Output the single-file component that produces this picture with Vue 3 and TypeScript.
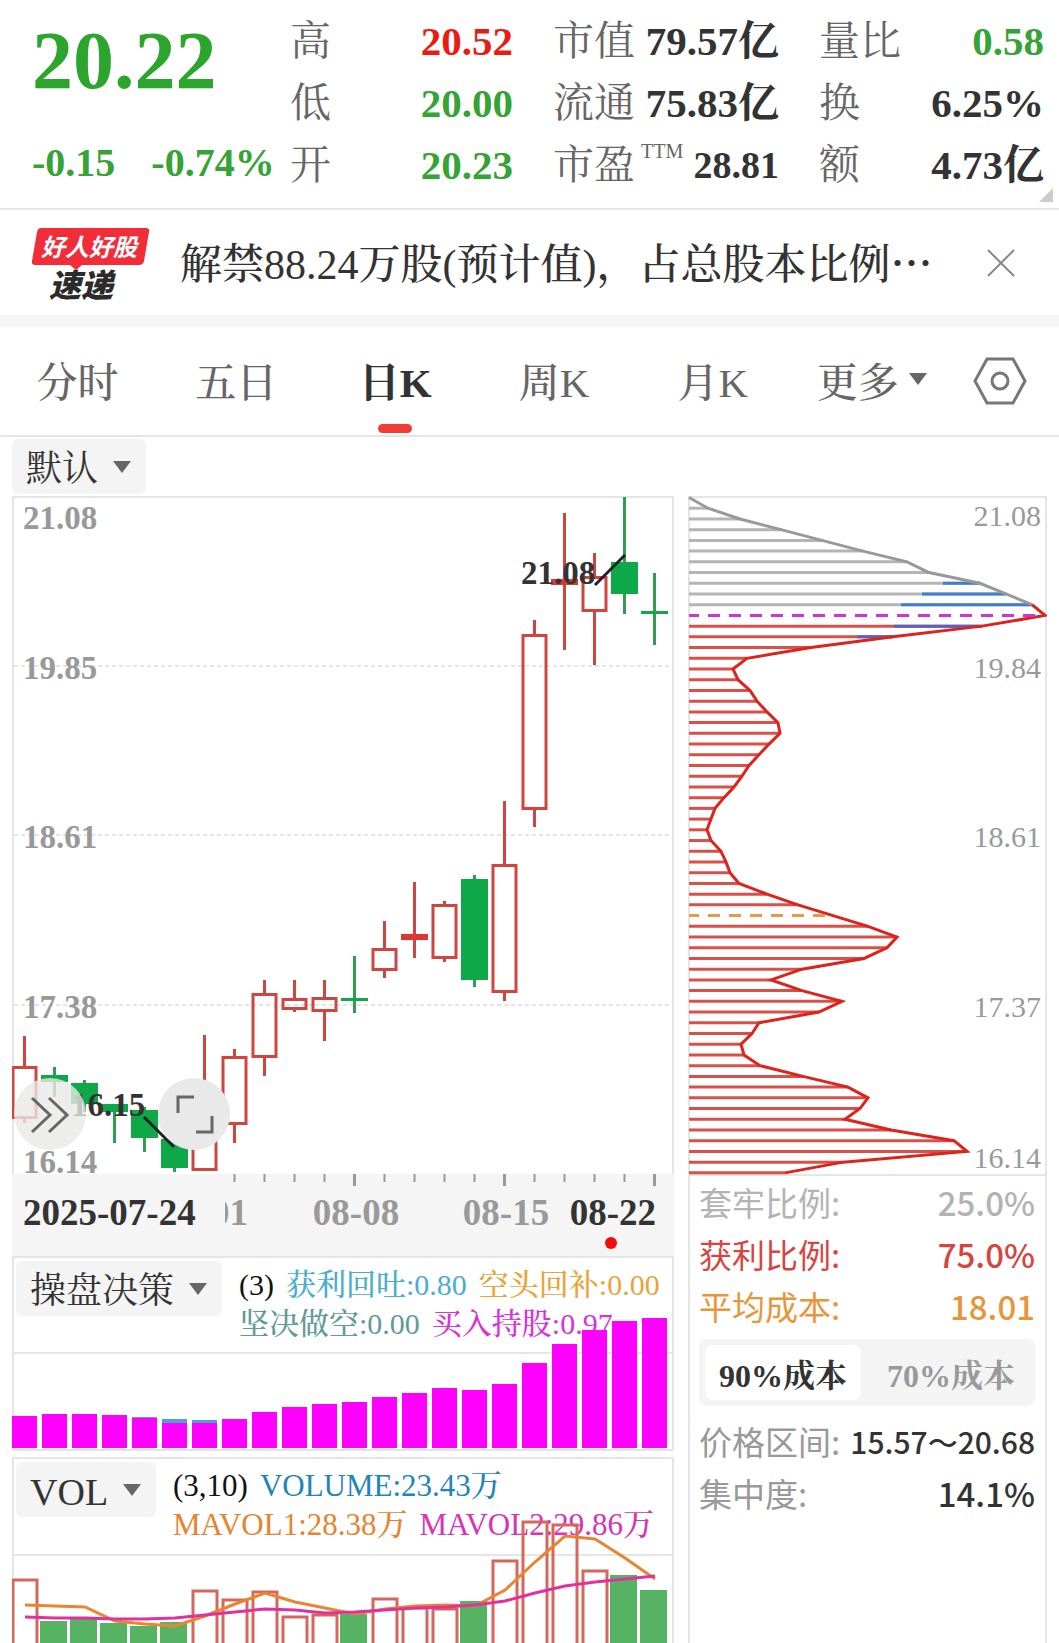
<script setup lang="ts">
import { ref } from 'vue'

interface Stat { label: string; value: string; tone?: string; note?: string }
interface Candle { up: boolean; high: number; top: number; bottom: number; low: number }

const quoteColumns: Stat[][] = [
  [
    { label: '高', value: '20.52', tone: 'rise' },
    { label: '低', value: '20.00', tone: 'fall' },
    { label: '开', value: '20.23', tone: 'fall' },
  ],
  [
    { label: '市值', value: '79.57亿' },
    { label: '流通', value: '75.83亿' },
    { label: '市盈', value: '28.81', note: 'TTM' },
  ],
  [
    { label: '量比', value: '0.58', tone: 'fall' },
    { label: '换', value: '6.25%' },
    { label: '额', value: '4.73亿' },
  ],
]

const tabs = ['分时', '五日', '日K', '周K', '月K', '更多']
const activeTab = ref('日K')
const costRange = ref('90%成本')
const newsOpen = ref(true)

const step = 30
const centerX = (i: number) => 24 + i * step

const c = (up: boolean, high: number, top: number, bottom: number, low: number): Candle =>
  ({ up, high, top, bottom, low })

const candles: Candle[] = [
  c(true, 1036, 1066, 1119, 1123),
  c(false, 1067, 1075, 1082, 1097),
  c(false, 1080, 1083, 1104, 1112),
  c(false, 1104, 1104, 1112, 1143),
  c(false, 1107, 1110, 1138, 1152),
  c(false, 1139, 1139, 1168, 1172),
  c(true, 1035, 1120, 1171, 1171),
  c(true, 1049, 1056, 1125, 1143),
  c(true, 980, 993, 1058, 1076),
  c(true, 980, 998, 1010, 1012),
  c(true, 980, 997, 1012, 1041),
  c(false, 956, 998, 1001, 1013),
  c(true, 921, 948, 971, 978),
  c(true, 882, 934, 940, 958),
  c(true, 901, 904, 959, 962),
  c(false, 875, 879, 980, 987),
  c(true, 801, 864, 993, 1001),
  c(true, 620, 634, 810, 827),
  c(true, 513, 579, 585, 650),
  c(true, 553, 576, 612, 665),
  c(false, 497, 562, 594, 614),
  c(false, 573, 611, 614, 645),
]

const priceLabels = [
  { text: '21.08', y: 529 },
  { text: '19.85', y: 679 },
  { text: '18.61', y: 848 },
  { text: '17.38', y: 1018 },
  { text: '16.14', y: 1173 },
]
const gridLines = [666, 835, 1005]
const ticks = Array.from({ length: 15 }, (_, i) => i + 7)
const isMajor = (i: number) => i === 11 || i === 16 || i === 21

const holdTops = [1416, 1414, 1414, 1415, 1418, 1423, 1423, 1419, 1412, 1407, 1404, 1402, 1397, 1393, 1388, 1390, 1384, 1363, 1344, 1330, 1321, 1318]
const profitTops: Record<number, number> = { 4: 1417, 5: 1419, 6: 1420 }

const volumes: [boolean, number][] = [
  [true, 1579], [false, 1621], [false, 1619], [false, 1623], [false, 1626], [false, 1622],
  [true, 1590], [true, 1599], [true, 1591], [true, 1616], [true, 1614], [false, 1614],
  [true, 1598], [true, 1607], [true, 1608], [false, 1601], [true, 1560], [true, 1521],
  [true, 1524], [true, 1570], [false, 1575], [false, 1590],
]
const ma3 = [1605, 1606, 1607, 1621, 1624, 1626, 1616, 1604, 1593, 1602, 1608, 1614, 1609, 1606, 1605, 1606, 1590, 1562, 1536, 1539, 1558, 1579]
const ma10 = [1617, 1618, 1618, 1619, 1619, 1618, 1615, 1612, 1609, 1610, 1613, 1612, 1610, 1608, 1607, 1605, 1601, 1593, 1586, 1582, 1579, 1576]
const toPoints = (ys: number[]) => ys.map((y, i) => `${centerX(i) + 1},${y}`).join(' ')

/* Share of chips held at each price level, from the highest price down. */
const chips = [
  0, 19, 51, 92, 133, 174, 218, 240, 291, 317, 343, 356, 293, 204, 122, 58,
  44, 49, 61, 68, 78, 89, 91, 80, 70, 60, 53, 45, 35, 26, 22, 18,
  22, 32, 37, 41, 50, 78, 109, 144, 179, 208, 198, 175, 113, 82, 113, 153,
  130, 70, 63, 52, 55, 71, 114, 159, 179, 171, 156, 202, 265, 278, 154, 96,
]
const chipLeft = 689
const chipY = (k: number) => 497.5 + k * 10.72
const currentLevel = 11
const averageLevel = 39
const recentChips: { k: number; from: number }[] = [
  { k: 8, from: 254 }, { k: 9, from: 233 }, { k: 10, from: 212 },
  { k: 12, from: 205 }, { k: 13, from: 168 },
]
const chipRows = chips
  .map((w, k) => ({ w, k }))
  .filter(({ w, k }) => w > 0 && k !== currentLevel && k !== averageLevel)
const outline = (from: number, to: number) =>
  chips.slice(from, to).map((w, i) => `${chipLeft + w},${chipY(from + i)}`).join(' ')
const chipLabels = [
  { text: '21.08', y: 526 },
  { text: '19.84', y: 678 },
  { text: '18.61', y: 847 },
  { text: '17.37', y: 1017 },
  { text: '16.14', y: 1168 },
]
</script>

<template>
  <main class="page">
    <header class="quote">
      <div class="price">
        <strong class="last">20.22</strong>
        <div class="change"><span>-0.15</span><span>-0.74%</span></div>
      </div>
      <dl v-for="(column, n) in quoteColumns" :key="n" class="stats">
        <div v-for="s in column" :key="s.label" class="stat">
          <dt>{{ s.label }}<sup v-if="s.note">{{ s.note }}</sup></dt>
          <dd :class="[s.tone, { compact: s.note }]">{{ s.value }}</dd>
        </div>
      </dl>
      <span class="corner"></span>
    </header>

    <section v-if="newsOpen" class="news">
      <svg class="badge" viewBox="0 0 118 84" role="img" aria-label="好人好股速递">
        <path d="M9 1H114Q118 1 117 5L112 34Q111 38 107 38H50L44 43L38 38H3Q-1 38 0 34L5 5Q6 1 9 1Z" fill="#f22d3a" />
        <text x="9" y="29" class="badge-top">好人好股</text>
        <text x="17" y="70" class="badge-bottom">速递</text>
      </svg>
      <a class="headline" href="#">解禁88.24万股(预计值)，占总股本比例<span class="dots">…</span></a>
      <button class="close" aria-label="关闭" @click="newsOpen = false">
        <svg viewBox="0 0 28 28"><path d="M1 1L27 27M27 1L1 27" /></svg>
      </button>
    </section>

    <nav class="tabs">
      <button v-for="t in tabs" :key="t" class="tab" :class="{ active: t === activeTab }" @click="activeTab = t">
        {{ t }}<span v-if="t === '更多'" class="arrow"></span>
      </button>
      <button class="settings" aria-label="设置">
        <svg viewBox="0 0 54 48">
          <path d="M14 2H40L52 24L40 46H14L2 24Z" />
          <circle cx="27" cy="24" r="8" />
        </svg>
      </button>
    </nav>

    <div class="toolbar">
      <label class="picker">
        <select aria-label="均线方案"><option>默认</option></select>
        <span class="arrow"></span>
      </label>
    </div>

    <div class="board">
      <div class="left">
        <section class="kline">
          <svg class="plot" viewBox="12 496 662 760">
            <rect x="13" y="497" width="660" height="700" class="frame" />
            <line v-for="y in gridLines" :key="y" x1="14" x2="670" :y1="y" :y2="y" class="dashed" />
            <text v-for="p in priceLabels" :key="p.text" x="23" :y="p.y" class="scale">{{ p.text }}</text>
            <g v-for="(k, i) in candles" :key="i" :class="k.up ? 'up' : 'down'">
              <line :x1="centerX(i) + 0.5" :x2="centerX(i) + 0.5" :y1="k.high" :y2="k.top" />
              <line :x1="centerX(i) + 0.5" :x2="centerX(i) + 0.5" :y1="k.bottom" :y2="k.low" />
              <rect
                v-if="k.up && k.bottom - k.top > 6"
                :x="centerX(i) - 11" :y="k.top + 1.5" width="23" :height="k.bottom - k.top - 3"
                class="hollow"
              />
              <rect v-else :x="centerX(i) - 13" :y="k.top" width="27" :height="k.bottom - k.top" class="solid" />
            </g>
            <text x="521" y="584" class="scale dark">21.08</text>
            <path d="M595 585L625 555M144 1117L174 1147" class="pointer" />
            <text x="71" y="1116" class="scale dark">16.15</text>

            <rect x="12" y="1174" width="662" height="82" fill="#f5f5f5" />
            <line
              v-for="i in ticks" :key="i"
              :x1="centerX(i) + 0.5" :x2="centerX(i) + 0.5" y1="1174" :y2="isMajor(i) ? 1186 : 1182"
              stroke="#999" :stroke-width="isMajor(i) ? 3 : 2"
            />
            <clipPath id="date-clip"><rect x="225" y="1190" width="60" height="50" /></clipPath>
            <text x="248" y="1225" text-anchor="end" class="date" clip-path="url(#date-clip)">01</text>
            <text x="23" y="1225" class="date dark">2025-07-24</text>
            <text x="356" y="1225" text-anchor="middle" class="date">08-08</text>
            <text x="506" y="1225" text-anchor="middle" class="date">08-15</text>
            <text x="656" y="1225" text-anchor="end" class="date dark">08-22</text>
            <circle cx="611" cy="1243" r="6" fill="#f40b0b" />
          </svg>
          <div class="floating">
            <button class="round faint" aria-label="展开">
              <svg viewBox="0 0 72 72"><path d="M18 20L36 37L18 54M35 20L53 37L35 54" /></svg>
            </button>
            <button class="round" aria-label="全屏">
              <svg viewBox="0 0 72 72"><path d="M20 35V19H36M54 38V54H38" /></svg>
            </button>
          </div>
        </section>

        <section class="indicator">
          <div class="legend">
            <label class="picker">
              <select aria-label="指标一"><option>操盘决策</option></select>
              <span class="arrow"></span>
            </label>
            <p class="values">
              <span class="ink">(3)</span>
              <span class="sky">获利回吐:0.80</span>
              <span class="amber">空头回补:0.00</span>
              <span class="teal">坚决做空:0.00</span>
              <span class="pink">买入持股:0.97</span>
            </p>
          </div>
          <svg class="plot" viewBox="12 1256 662 195">
            <rect x="13" y="1257" width="660" height="193" class="frame" />
            <line x1="13" x2="673" y1="1353" y2="1353" class="frame" />
            <rect
              v-for="(top, i) in profitTops" :key="'p' + i"
              :x="centerX(Number(i)) - 12" :y="top" width="25" :height="1448 - top" fill="#4f9fd8"
            />
            <rect
              v-for="(top, i) in holdTops" :key="i"
              :x="centerX(i) - 12" :y="top" width="25" :height="1448 - top" fill="#f0f"
            />
          </svg>
        </section>

        <section class="indicator">
          <div class="legend">
            <label class="picker latin">
              <select aria-label="指标二"><option>VOL</option></select>
              <span class="arrow"></span>
            </label>
            <p class="values wide">
              <span class="ink">(3,10)</span>
              <span class="blue">VOLUME:23.43万</span>
              <span class="orange">MAVOL1:28.38万</span>
              <span class="rose">MAVOL2:29.86万</span>
            </p>
          </div>
          <svg class="plot" viewBox="12 1457 662 186">
            <rect x="13" y="1458" width="660" height="200" class="frame" />
            <line x1="13" x2="673" y1="1555" y2="1555" class="frame" />
            <template v-for="([up, top], i) in volumes" :key="i">
              <rect v-if="up" :x="centerX(i) - 11" :y="top + 1" width="24" height="150" class="vol-up" />
              <rect v-else :x="centerX(i) - 14" :y="top" width="27" height="150" fill="#57b364" />
            </template>
            <polyline :points="toPoints(ma3)" stroke="#e8862f" class="average" />
            <polyline :points="toPoints(ma10)" stroke="#e0319f" class="average" />
          </svg>
        </section>
      </div>

      <aside class="right">
        <svg class="plot" viewBox="688 496 359 680">
          <rect x="689" y="497" width="357" height="678" class="frame" />
          <line
            v-for="r in chipRows" :key="r.k"
            :x1="chipLeft" :x2="chipLeft + r.w" :y1="chipY(r.k)" :y2="chipY(r.k)"
            :stroke="r.k < currentLevel ? '#b5b5b5' : '#d9504b'" stroke-width="3"
          />
          <line
            v-for="b in recentChips" :key="'b' + b.k"
            :x1="chipLeft + b.from" :x2="chipLeft + chips[b.k]" :y1="chipY(b.k)" :y2="chipY(b.k)"
            :stroke="b.k < currentLevel ? '#3f80cc' : '#5462c4'" stroke-width="3"
          />
          <polyline :points="outline(0, 11)" stroke="#999" class="contour" />
          <polyline :points="outline(10, 64)" stroke="#dc231c" class="contour" />
          <line
            :x1="chipLeft" x2="1036" :y1="chipY(currentLevel)" :y2="chipY(currentLevel)"
            stroke="#cf35d3" stroke-width="3" stroke-dasharray="12 9" stroke-dashoffset="2"
          />
          <line
            :x1="chipLeft" x2="825" :y1="chipY(averageLevel)" :y2="chipY(averageLevel)"
            stroke="#e59b4c" stroke-width="3" stroke-dasharray="12 9" stroke-dashoffset="2"
          />
          <text v-for="p in chipLabels" :key="p.text" x="1041" :y="p.y" text-anchor="end" class="chip-scale">{{ p.text }}</text>
        </svg>
        <div class="summary">
          <dl class="facts">
            <div class="silver"><dt>套牢比例:</dt><dd>25.0%</dd></div>
            <div class="red"><dt>获利比例:</dt><dd>75.0%</dd></div>
            <div class="gold"><dt>平均成本:</dt><dd>18.01</dd></div>
          </dl>
          <div class="segment">
            <button
              v-for="r in ['90%成本', '70%成本']" :key="r"
              :class="{ on: costRange === r }" @click="costRange = r"
            >{{ r }}</button>
          </div>
          <dl class="facts plain">
            <div><dt>价格区间:</dt><dd class="range">15.57～20.68</dd></div>
            <div><dt>集中度:</dt><dd>14.1%</dd></div>
          </dl>
        </div>
      </aside>
    </div>
  </main>
</template>

<style>
body {
  margin: 0;
  background: #fff;
}
</style>

<style scoped>
.page {
  font-family: "Liberation Serif", "Noto Serif CJK SC", "Noto Sans CJK SC", serif;
  color: #333;
  background: #fff;
}
button,
select {
  margin: 0;
  padding: 0;
  border: 0;
  background: none;
  color: inherit;
  font: inherit;
  appearance: none;
}
dl, dd, p {
  margin: 0;
}

.quote {
  position: relative;
  display: grid;
  grid-template-columns: minmax(0, 218fr) minmax(0, 223fr) minmax(0, 226fr) minmax(0, 225fr);
  column-gap: 40px;
  padding: 10px 15px 12px 32px;
  border-bottom: 2px solid #e5e5e5;
}
.price {
  color: #2ba52b;
  font-weight: bold;
  white-space: nowrap;
}
.last {
  display: block;
  font-size: 82px;
  line-height: 102px;
}
.change {
  display: flex;
  gap: 36px;
  margin-top: 20px;
  font-size: 40px;
  line-height: 62px;
  color: #35a335;
}
.stat {
  display: flex;
  justify-content: space-between;
  font-size: 41px;
  line-height: 62px;
  white-space: nowrap;
}
.stat dt {
  display: flex;
  color: #666;
}
.stat sup {
  margin-left: 6px;
  font-size: 20px;
  line-height: 34px;
}
.stat dd {
  font-weight: bold;
}
.stat .compact {
  font-size: 38px;
}
.rise {
  color: #ea1c12;
}
.fall {
  color: #35a335;
}
.corner {
  position: absolute;
  right: 6px;
  bottom: 6px;
  border-left: 14px solid transparent;
  border-bottom: 14px solid #ccc;
}

.news {
  display: flex;
  align-items: center;
  height: 105px;
  padding: 0 44px 0 32px;
}
.badge {
  width: 118px;
  height: 84px;
  margin-top: 12px;
  flex: none;
}
.badge-top {
  font: italic bold 24px "Noto Sans CJK SC", sans-serif;
  fill: #fff;
}
.badge-bottom {
  font: italic 900 32px "Noto Sans CJK SC", sans-serif;
  fill: #2b2b2b;
}
.headline {
  flex: 1;
  min-width: 0;
  margin: 0 30px;
  overflow: hidden;
  color: #333;
  font-size: 42px;
  font-weight: 500;
  line-height: 62px;
  text-decoration: none;
  white-space: nowrap;
}
.dots {
  font-family: "Noto Sans CJK SC", sans-serif;
}
.close {
  width: 28px;
  height: 28px;
}
.close svg {
  display: block;
  stroke: #888;
  stroke-width: 2;
}

.tabs {
  display: grid;
  grid-template-columns: repeat(6, 3fr) 2fr;
  border-top: 12px solid #f5f5f5;
  border-bottom: 2px solid #e5e5e5;
}
.tab {
  position: relative;
  display: flex;
  align-items: center;
  justify-content: center;
  height: 108px;
  padding: 0 4px 4px 0;
  color: #666;
  font-size: 41px;
  font-weight: 500;
}
.active {
  color: #333;
  font-weight: bold;
}
.active::after {
  content: "";
  position: absolute;
  bottom: 2px;
  width: 34px;
  height: 9px;
  border-radius: 5px;
  background: #f23c36;
}
.arrow {
  border: 9px solid transparent;
  border-top: 12px solid #666;
  border-bottom: 0;
}
.tab .arrow {
  margin-left: 10px;
}
.settings {
  display: flex;
  align-items: center;
  justify-content: center;
  padding-right: 12px;
}
.settings svg {
  width: 54px;
  height: 48px;
  fill: none;
  stroke: #777;
  stroke-width: 3;
}

.toolbar {
  display: flex;
  padding: 2px 12px;
}
.picker {
  position: relative;
  display: flex;
  align-items: center;
  height: 55px;
  border-radius: 6px;
  background: #f4f4f4;
  font-size: 36px;
}
.picker select {
  box-sizing: border-box;
  height: 55px;
  padding: 4px 47px 0 14px;
}
.picker .arrow {
  position: absolute;
  right: 15px;
  pointer-events: none;
}
.latin {
  font-size: 38px;
}

.board {
  display: grid;
  grid-template-columns: 662fr 359fr;
  column-gap: 14px;
  padding: 0 12px;
}
.plot {
  display: block;
  width: 100%;
  height: auto;
}
.frame {
  fill: none;
  stroke: #e5e5e5;
  stroke-width: 2;
}
.dashed {
  stroke: #e5e5e5;
  stroke-width: 2;
  stroke-dasharray: 4 3;
}
.scale {
  font-size: 33px;
  font-weight: bold;
  fill: #999;
}
.date {
  font-size: 37px;
  font-weight: bold;
  fill: #999;
}
.dark {
  fill: #333;
}
.up line,
.hollow {
  fill: none;
  stroke: #cf4540;
  stroke-width: 3;
}
.up .solid {
  fill: #dc3733;
}
.down line {
  stroke: #2f9e50;
  stroke-width: 3;
}
.down .solid {
  fill: #0fa848;
}
.pointer {
  stroke: #222;
  stroke-width: 3;
}

.kline {
  position: relative;
}
.floating {
  position: absolute;
  left: 2px;
  bottom: 106px;
  display: flex;
  gap: 72px;
}
.round {
  width: 72px;
  height: 72px;
  border-radius: 50%;
  background: #e9e9e9;
}
.faint {
  background: rgb(232 232 230 / 80%);
}
.round svg {
  display: block;
  fill: none;
  stroke: #666;
  stroke-width: 3;
}

.indicator {
  position: relative;
}
.indicator + .indicator {
  margin-top: 6px;
}
.indicator .plot {
  position: relative;
  pointer-events: none;
}
.legend {
  position: absolute;
  top: 5px;
  left: 4px;
  right: 0;
  display: flex;
  align-items: flex-start;
  gap: 17px;
}
.values {
  flex: 1;
  display: flex;
  flex-wrap: wrap;
  column-gap: 12px;
  padding-top: 4px;
  font-size: 30px;
  font-weight: 500;
  line-height: 39px;
  white-space: nowrap;
}
.wide {
  font-size: 31px;
}
.ink { color: #111; }
.sky { color: #4badd0; }
.amber { color: #e8a53a; }
.teal { color: #5f9c96; }
.pink { color: #d932d9; }
.blue { color: #1f86b8; }
.orange { color: #e8832e; }
.rose { color: #d932b4; }
.vol-up {
  fill: none;
  stroke: #d5675d;
  stroke-width: 3;
}
.average {
  fill: none;
  stroke-width: 3;
}

.right {
  display: flex;
  flex-direction: column;
}
.contour {
  fill: none;
  stroke-width: 3;
}
.chip-scale {
  font-size: 30px;
  fill: #999;
}
.summary {
  flex: 1;
  padding: 0 10px 0 9px;
  border: 2px solid #e5e5e5;
  border-width: 0 2px;
  font-family: "Noto Sans CJK SC", sans-serif;
}
.facts div {
  display: flex;
  justify-content: space-between;
  font-size: 33px;
  line-height: 52px;
  white-space: nowrap;
}
.facts dt {
  font-weight: 400;
}
.facts dd {
  font-weight: 500;
}
.silver { color: #b3b3b3; }
.red { color: #d64541; }
.gold { color: #e8963a; }
.plain dt {
  color: #999;
}
.plain .range {
  font-size: 30px;
}
.segment {
  display: flex;
  justify-content: space-between;
  margin: 7px 0 9px;
  padding: 6px;
  border-radius: 8px;
  background: #f4f4f4;
}
.segment button {
  width: 156px;
  height: 55px;
  border-radius: 8px;
  color: #999;
  font-family: "Liberation Serif", "Noto Serif CJK SC", "Noto Sans CJK SC", serif;
  font-size: 32px;
  font-weight: bold;
}
.segment .on {
  background: #fff;
  color: #333;
}
</style>
